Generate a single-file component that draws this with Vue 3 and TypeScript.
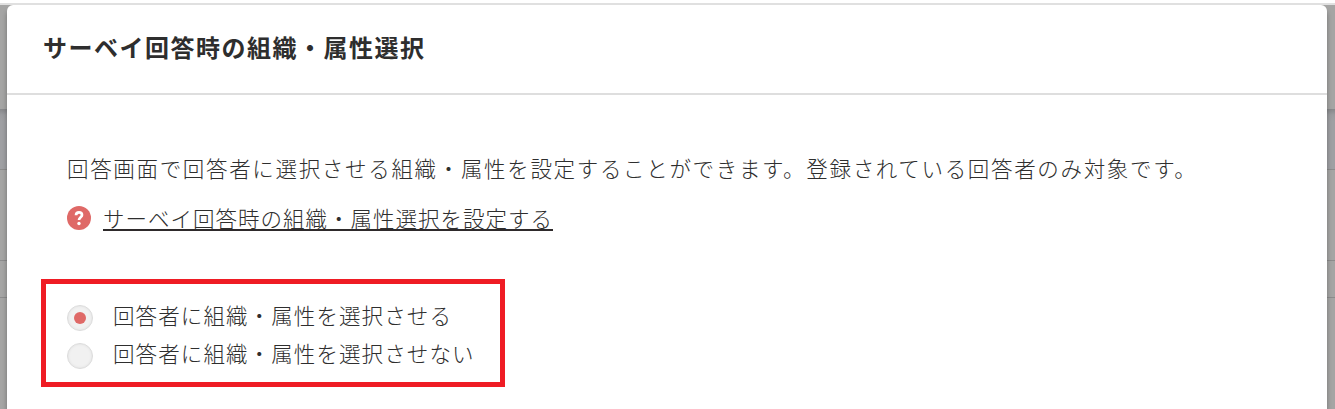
<script setup lang="ts">
import { ref } from 'vue'

interface Choice {
  value: string
  label: string
}

const choices: Choice[] = [
  { value: 'allow', label: '回答者に組織・属性を選択させる' },
  { value: 'deny', label: '回答者に組織・属性を選択させない' },
]
const selected = ref('allow')
</script>

<template>
  <div class="page">
    <div class="backdrop">
      <div class="band top"></div>
      <div class="band toolbar"></div>
      <div class="band row-large"></div>
      <div class="band row-small"></div>
      <div class="band rest"></div>
    </div>
    <section class="modal">
      <header class="head">
        <h1>サーベイ回答時の組織・属性選択</h1>
      </header>
      <div class="body">
        <p class="lead">回答画面で回答者に選択させる組織・属性を設定することができます。登録されている回答者のみ対象です。</p>
        <div class="help">
          <svg class="help-icon" width="24" height="24" viewBox="0 0 24 24">
            <circle cx="12" cy="12" r="12" fill="#df6967" />
            <path d="M9 9.2C9.1 7.3 10.2 6.3 12 6.3C13.9 6.3 15 7.3 15 8.9C15 11.2 12 11.2 12 14.1" fill="none" stroke="#fff" stroke-width="2.7" />
            <circle cx="12" cy="17.5" r="1.7" fill="#fff" />
          </svg>
          <a class="link">サーベイ回答時の組織・属性選択を設定する</a>
        </div>
        <div class="choices">
          <label v-for="c in choices" :key="c.value" class="choice" @click="selected = c.value">
            <span class="radio"><span v-if="selected === c.value" class="dot"></span></span>
            <span class="label">{{ c.label }}</span>
          </label>
        </div>
      </div>
    </section>
  </div>
</template>

<style>
body {
  margin: 0;
  overflow: hidden;
}
</style>

<style scoped>
.page {
  position: relative;
  box-sizing: border-box;
  height: 409px;
  padding: 5px 8px 0 7px;
  overflow: hidden;
  background: #fff;
  color: #2e2e2e;
  font-family: 'Noto Sans CJK JP', sans-serif;
}
.backdrop {
  position: absolute;
  inset: 3px 0 0;
  display: flex;
  flex-direction: column;
  border-top: 2px solid #e0e0e0;
}
.band {
  box-sizing: border-box;
  background: #a5a5a4;
  border-bottom: 1px solid #8c8c8c;
}
.top { height: 104px; border-bottom: 0; }
.toolbar {
  height: 61px;
  background: linear-gradient(#87888a, #9b9c9f 6px, #9fa0a3 12px);
}
.row-large { height: 91px; }
.row-small { height: 37px; }
.rest { flex: 1; border: 0; }
.modal {
  position: relative;
  height: 420px;
  background: #fff;
  border-radius: 6px 6px 0 0;
  box-shadow: 0 5px 5px rgba(0, 0, 0, 0.32);
}
.head {
  box-sizing: border-box;
  height: 90px;
  padding: 24px 36px 0;
  border-bottom: 2px solid #dedede;
}
h1 {
  margin: 0;
  font-size: 24px;
  font-weight: 700;
  line-height: 36px;
  letter-spacing: 1.5px;
  white-space: nowrap;
}
.body { padding: 57px 34px 0; }
.lead {
  margin: 0 0 0 26px;
  font-size: 21.5px;
  font-weight: 300;
  line-height: 32px;
  letter-spacing: 1.67px;
  white-space: nowrap;
}
.help {
  display: flex;
  align-items: center;
  height: 28px;
  margin: 20px 0 0 26px;
}
.help-icon { flex: none; margin-right: 12px; }
.link {
  box-sizing: border-box;
  height: 26px;
  font-size: 21.5px;
  font-weight: 300;
  line-height: 25px;
  letter-spacing: 1px;
  border-bottom: 2px solid #2e2a2b;
  white-space: nowrap;
}
.choices {
  box-sizing: border-box;
  width: 464px;
  height: 108px;
  margin-top: 47px;
  padding: 15px 21px;
  border: 5px solid #ef1c24;
}
.choice {
  display: flex;
  align-items: center;
  height: 38px;
}
.radio {
  display: flex;
  flex: none;
  align-items: center;
  justify-content: center;
  box-sizing: border-box;
  width: 26px;
  height: 26px;
  margin-right: 20px;
  border: 1px solid #dcdcdc;
  border-radius: 50%;
  background: #f1f1f1;
  box-shadow: inset 0 0 3px rgba(0, 0, 0, 0.08);
}
.dot {
  width: 12px;
  height: 12px;
  border-radius: 50%;
  background: #df6967;
}
.label {
  margin-bottom: 7px;
  font-size: 21.5px;
  font-weight: 300;
  line-height: 30px;
  letter-spacing: 1.1px;
  white-space: nowrap;
}
</style>
